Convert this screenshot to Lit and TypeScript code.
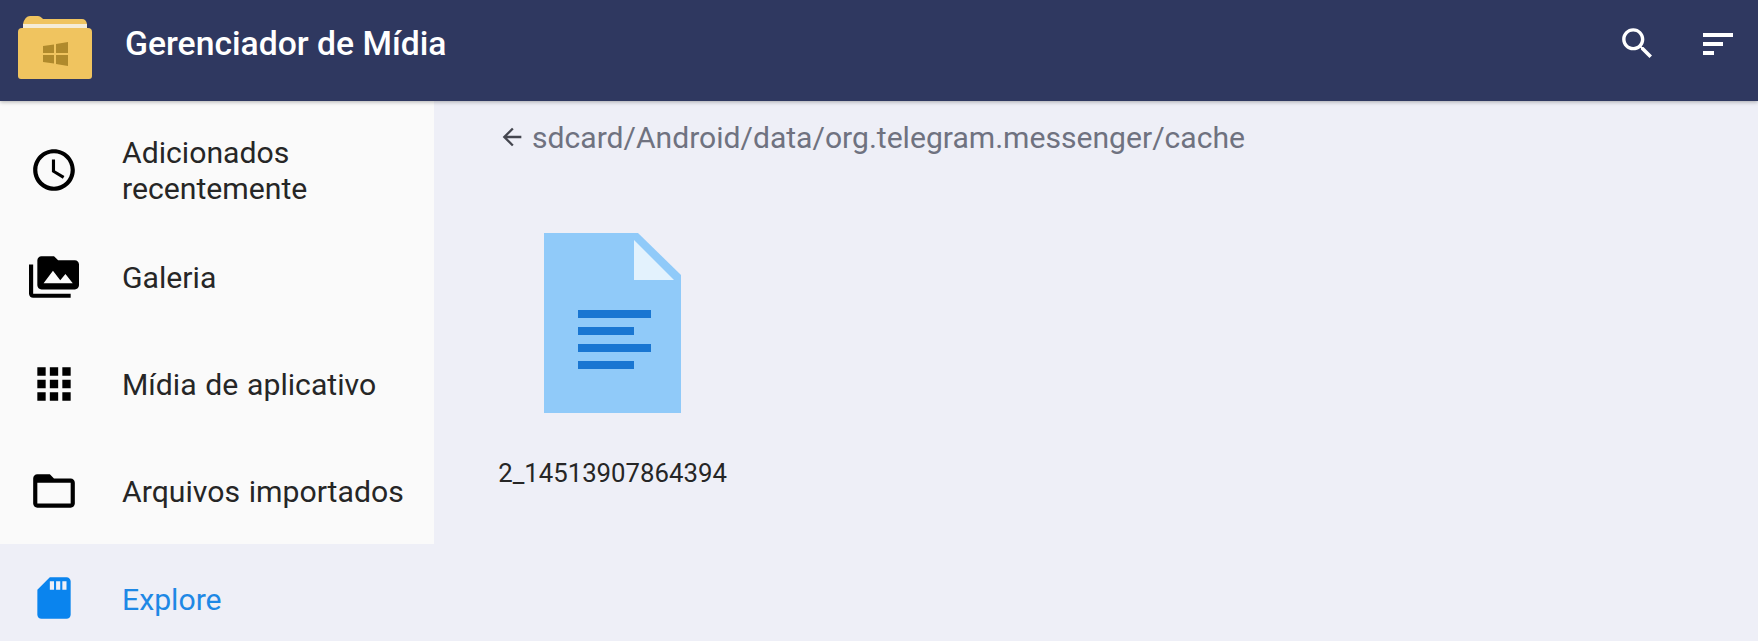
import { LitElement, html, css } from "lit";
import { customElement } from "lit/decorators.js";

const icon = (d: string) => html`<svg class="ico" viewBox="0 0 24 24"><path d=${d}></path></svg>`;

const NAV = [
  { label: "Adicionados recentemente", d: "M11.99 2C6.47 2 2 6.48 2 12s4.47 10 9.99 10C17.52 22 22 17.52 22 12S17.52 2 11.99 2zM12 20c-4.42 0-8-3.58-8-8s3.58-8 8-8 8 3.58 8 8-3.58 8-8 8zm.5-13H11v6l5.25 3.15.75-1.23-4.5-2.67z" },
  { label: "Galeria", d: "M2 6H0v5h.01L0 20c0 1.1.9 2 2 2h18v-2H2V6zm20-2h-8l-2-2H6c-1.1 0-1.99.9-1.99 2L4 16c0 1.1.9 2 2 2h16c1.1 0 2-.9 2-2V6c0-1.1-.9-2-2-2zM7 15l4.5-6 3.5 4.51 2.5-3.01L21 15H7z" },
  { label: "Mídia de aplicativo", d: "M4 8h4V4H4v4zm6 12h4v-4h-4v4zm-6 0h4v-4H4v4zm0-6h4v-4H4v4zm6 0h4v-4h-4v4zm6-10v4h4V4h-4zm-6 4h4V4h-4v4zm6 6h4v-4h-4v4zm0 6h4v-4h-4v4z" },
  { label: "Arquivos importados", d: "M20 6h-8l-2-2H4c-1.1 0-1.99.9-1.99 2L2 18c0 1.1.9 2 2 2h16c1.1 0 2-.9 2-2V8c0-1.1-.9-2-2-2zm0 12H4V8h16v10z" },
];
const SD = "M18 2h-8L4.02 8 4 20c0 1.1.9 2 2 2h12c1.1 0 2-.9 2-2V4c0-1.1-.9-2-2-2zm-6 6h-2V4h2v4zm3 0h-2V4h2v4zm3 0h-2V4h2v4z";

@customElement("app-root")
export class AppRoot extends LitElement {
  static styles = css`
    :host { display: flex; flex-direction: column; width: 1758px; height: 641px; overflow: hidden; background: #eeeff7; font-family: Roboto, sans-serif; }
    .bar { position: relative; z-index: 1; flex: none; height: 101px; box-sizing: border-box; padding: 0 0 14px 18px; background: #2f3860; color: #fff; display: flex; align-items: center; box-shadow: 0 1px 4px rgba(0,0,0,.3); }
    .logo { width: 74px; height: 64px; margin-top: 6px; flex: none; }
    .title { margin-left: 33px; font-size: 33.7px; font-weight: 500; flex: 1; }
    .search { width: 41px; height: 41px; fill: #fff; flex: none; margin-right: 45px; }
    .sort { display: flex; flex-direction: column; gap: 5px; width: 30px; margin-right: 25px; flex: none; }
    .sort i { display: block; height: 4px; background: #fff; }
    .sort .mid { width: 20px; }
    .sort .low { width: 11px; }
    .body { flex: 1; display: flex; min-height: 0; }
    .side { width: 434px; flex: none; }
    .list { background: #fafafa; padding-top: 15px; }
    .row { height: 107px; display: flex; align-items: center; padding-left: 29px; box-sizing: border-box; color: #262626; font-size: 30.2px; word-spacing: 1.2px; line-height: 36px; }
    .row.on { color: #1e88e5; padding-top: 1px; }
    .row span { width: 320px; margin-left: 43px; padding-top: 3px; }
    .ico { width: 50px; height: 50px; flex: none; fill: #000; }
    .on .ico { fill: #0a84ee; }
    .main { flex: 1; padding: 18px 0 0 65px; }
    .crumb { display: flex; align-items: center; height: 36px; font-size: 30.1px; color: #6f7280; }
    .crumb svg { width: 28px; height: 28px; margin-right: 6px; margin-left: -1px; fill: #44464f; flex: none; }
    .file { width: 227px; margin-top: 78px; display: flex; flex-direction: column; align-items: center; }
    .doc { width: 137px; height: 180px; }
    .name { margin-top: 44px; font-size: 25.75px; line-height: 32px; color: #262626; white-space: nowrap; }
  `;

  render() {
    return html`
      <header class="bar">
        <svg class="logo" viewBox="0 0 74 64">
          <path d="M5 14 V9 Q7 1 12 1 H20 Q22 1 24 3 L25 4 H64 Q68 4 69 9 V14Z" fill="#f0c45f"></path>
          <rect x="5" y="9" width="64" height="5" fill="#f5ecd6"></rect>
          <path d="M0 17 Q0 13 4 13 H70 Q74 13 74 17 V61 Q74 64 71 64 H3 Q0 64 0 61Z" fill="#f0c45f"></path>
          <path d="M25 31 L36 29.5 V38 H25ZM38 29 L50 27 V38 H38ZM25 40 H36 V48.5 L25 47ZM38 40 H50 V51 L38 49Z" fill="#b08a2c"></path>
        </svg>
        <div class="title">Gerenciador de Mídia</div>
        <svg class="search" viewBox="0 0 24 24"><path d="M15.5 14h-.79l-.28-.27C15.41 12.59 16 11.11 16 9.5 16 5.91 13.09 3 9.5 3S3 5.91 3 9.5 5.91 16 9.5 16c1.61 0 3.09-.59 4.23-1.57l.27.28v.79l5 4.99L20.49 19l-4.99-5zm-6 0C7.01 14 5 11.99 5 9.5S7.01 5 9.5 5 14 7.01 14 9.5 11.99 14 9.5 14z"></path></svg>
        <div class="sort"><i></i><i class="mid"></i><i class="low"></i></div>
      </header>
      <div class="body">
        <nav class="side">
          <div class="list">
            ${NAV.map((n) => html`<div class="row">${icon(n.d)}<span>${n.label}</span></div>`)}
          </div>
          <div class="row on">${icon(SD)}<span>Explore</span></div>
        </nav>
        <main class="main">
          <div class="crumb">
            <svg viewBox="0 0 24 24"><path d="M20 11H7.83l5.59-5.59L12 4l-8 8 8 8 1.41-1.41L7.83 13H20v-2z"></path></svg>
            sdcard/Android/data/org.telegram.messenger/cache
          </div>
          <div class="file">
            <svg class="doc" viewBox="0 0 137 180">
              <path d="M0 0 H94 L137 42 V180 H0Z" fill="#90caf9"></path>
              <path d="M90 7 V47 H130Z" fill="#e3f2fd"></path>
              <g fill="#1976d2">
                <rect x="34" y="77" width="73" height="8"></rect>
                <rect x="34" y="94" width="56" height="8"></rect>
                <rect x="34" y="111" width="73" height="8"></rect>
                <rect x="34" y="128" width="56" height="8"></rect>
              </g>
            </svg>
            <div class="name">2_14513907864394</div>
          </div>
        </main>
      </div>
    `;
  }
}
